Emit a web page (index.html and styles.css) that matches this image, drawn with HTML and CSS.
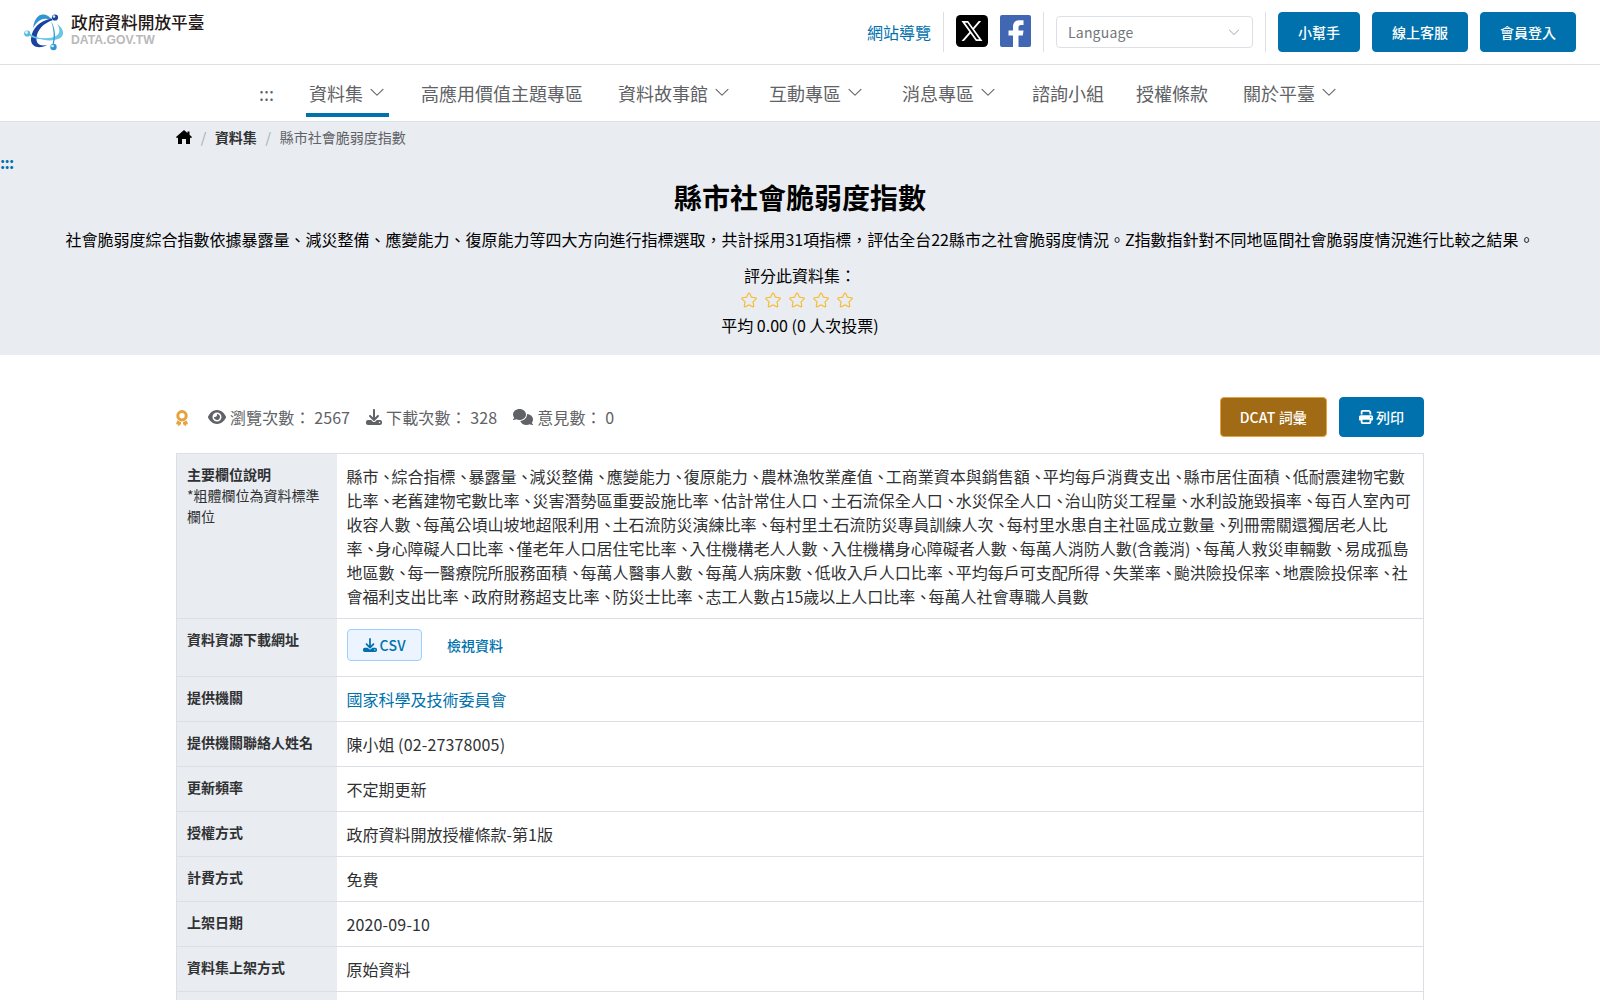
FILE: index.html
```
<!DOCTYPE html>
<html lang="zh-Hant-TW">
<head>
    <meta charset="UTF-8">
    <meta name="viewport" content="width=device-width, initial-scale=1.0">
    <title>縣市社會脆弱度指數 | 政府資料開放平臺</title>
    <link rel="stylesheet" href="styles.css">
</head>
<body>
    <!-- shared icons -->
    <svg class="sprite" width="0" height="0">
        <symbol id="chevron" viewBox="0 0 1024 1024"><path d="M831.872 340.864 512 652.672 192.128 340.864a30.592 30.592 0 0 0-42.752 0 29.12 29.12 0 0 0 0 41.6L489.664 714.24a32 32 0 0 0 44.672 0l340.288-331.712a29.12 29.12 0 0 0 0-41.728 30.592 30.592 0 0 0-42.752 0z"/></symbol>
        <symbol id="star" viewBox="0 0 1024 1024"><path d="m512 747.84 228.16 119.936a6.4 6.4 0 0 0 9.28-6.72l-43.52-254.08 184.512-179.904a6.4 6.4 0 0 0-3.52-10.88l-255.104-37.12L517.76 147.904a6.4 6.4 0 0 0-11.52 0L392.192 379.072l-255.104 37.12a6.4 6.4 0 0 0-3.52 10.88L318.08 606.976l-43.584 254.08a6.4 6.4 0 0 0 9.28 6.72L512 747.84zM313.6 924.48a70.4 70.4 0 0 1-102.144-74.24l37.888-220.928L88.96 472.96A70.4 70.4 0 0 1 128 352.896l221.76-32.256 99.2-200.96a70.4 70.4 0 0 1 126.208 0l99.2 200.96 221.824 32.256a70.4 70.4 0 0 1 39.04 120.064L774.72 629.376l37.888 220.928a70.4 70.4 0 0 1-102.144 74.24L512 820.096l-198.4 104.32z"/></symbol>
        <symbol id="download" viewBox="0 0 512 512"><path d="M288 32c0-17.700-14.300-32-32-32s-32 14.300-32 32v242.700l-73.400-73.400c-12.500-12.500-32.800-12.500-45.300 0s-12.500 32.800 0 45.300l128 128c12.500 12.500 32.800 12.500 45.300 0l128-128c12.500-12.500 12.500-32.800 0-45.300s-32.800-12.500-45.300 0L288 274.700V32zM64 352c-35.300 0-64 28.700-64 64v32c0 35.300 28.700 64 64 64h384c35.300 0 64-28.700 64-64v-32c0-35.300-28.700-64-64-64H346.500l-45.300 45.300c-25 25-65.500 25-90.500 0L165.500 352H64zm368 56a24 24 0 1 1 0 48 24 24 0 1 1 0-48z"/></symbol>
    </svg>

    <header class="header">
        <a class="logo" href="#">
            <svg width="40" height="37" viewBox="0 0 40 37">
                <path d="M9 14C10.500 5 14 .5 19 .5c4 0 7.500 2.500 9.500 6.500C25 4.500 21 4 17.500 5.500 13.500 7.200 11.500 10 9 14z" fill="#2f96d3"/>
                <path d="M33 9.500c7.500 6 8.500 12.500 1 15.500-6 2.500-15 1.500-23-2 8 2 16.500 1.500 21-1 4.500-2.700 4-7.500 1-12.500z" fill="#68c6e6"/>
                <path d="M28 4.500C16 6 7.500 15 7 25c-.4 8 8 10.500 16 6-7 1.500-11-1-10.500-7C13 16 19.500 9.500 28.500 6z" fill="#1a43a0"/>
                <path d="M27 7c4.500 8 5 16 2.500 24l-1-.5c2-7.500 1.500-15.500-1.500-23.500z" fill="#2f96d3"/>
                <path d="M5 19c5 4 10 5.500 18 6-8 1-15-.5-19-4.500z" fill="#68c6e6"/>
                <circle cx="31" cy="3.500" r="3.100" fill="#1a43a0"/>
                <circle cx="30" cy="2.500" r="1.300" fill="#dfe9f8"/>
                <circle cx="3.200" cy="19.500" r="3.100" fill="#55bce2"/>
                <circle cx="2.500" cy="18.500" r="1.400" fill="#e8f8fc"/>
                <circle cx="29.500" cy="33" r="3.200" fill="#2f96d3"/>
                <circle cx="28.500" cy="32" r="1.300" fill="#dff1fa"/>
            </svg>
            <span class="logo-text">
                <span class="logo-name">政府資料開放平臺</span>
                <span class="logo-domain">DATA.GOV.TW</span>
            </span>
        </a>
        <div class="tools">
            <a class="sitemap" href="#">網站導覽</a>
            <span class="divider"></span>
            <a class="social" href="#">
                <svg width="32" height="32" viewBox="0 0 32 32">
                    <rect width="32" height="32" rx="4.500"/>
                    <path d="M5.500 6h6.600l4.900 6.700L22.700 6h2.500l-7.100 8.200L26.500 26h-6.600l-5.400-7.500L8 26H5.500l7.900-9.100zM9 7.800 20.700 24.200h2.500L11.400 7.800z" fill="#fff" fill-rule="evenodd"/>
                </svg>
            </a>
            <a class="social" href="#">
                <svg width="31" height="32" viewBox="0 0 31 32">
                    <rect width="31" height="32" rx="2" fill="#4267b2"/>
                    <path d="M13 32V20.500H8.500v-5H13V12c0-4.500 2.500-6.800 6-6.800h4.500V10H21c-2 0-2.500 1-2.500 2.300v3.200h5l-.7 5h-4.300V32z" fill="#fff"/>
                </svg>
            </a>
            <span class="divider"></span>
            <div class="select">
                <span>Language</span>
                <svg class="arrow"><use href="#chevron"/></svg>
            </div>
            <span class="divider"></span>
            <button class="btn">小幫手</button>
            <button class="btn">線上客服</button>
            <button class="btn">會員登入</button>
        </div>
    </header>

    <nav class="nav">
        <a class="accesskey" href="#">:::</a>
        <a class="drop active" href="#">資料集<svg><use href="#chevron"/></svg></a>
        <a href="#">高應用價值主題專區</a>
        <a class="drop" href="#">資料故事館<svg><use href="#chevron"/></svg></a>
        <a class="drop" href="#">互動專區<svg><use href="#chevron"/></svg></a>
        <a class="drop" href="#">消息專區<svg><use href="#chevron"/></svg></a>
        <a href="#">諮詢小組</a>
        <a href="#">授權條款</a>
        <a class="drop" href="#">關於平臺<svg><use href="#chevron"/></svg></a>
    </nav>

    <section class="hero">
        <div class="breadcrumb">
            <svg width="16" height="14" viewBox="0 0 16 14"><path d="M8 0 0 7l1 1.200 1-.7V14h4V9h4v5h4V7.500l1 .7L16 7l-2.500-2.200V1.500h-2V3z"/></svg>
            <i>/</i>
            <b>資料集</b>
            <i>/</i>
            <span>縣市社會脆弱度指數</span>
        </div>
        <a class="content-key" href="#">:::</a>
        <h1>縣市社會脆弱度指數</h1>
        <p class="desc">社會脆弱度綜合指數依據暴露量、減災整備、應變能力、復原能力等四大方向進行指標選取，共計採用31項指標，評估全台22縣市之社會脆弱度情況。Z指數指針對不同地區間社會脆弱度情況進行比較之結果。</p>
        <div class="rating">
            <div>評分此資料集：</div>
            <div class="stars">
                <svg><use href="#star"/></svg>
                <svg><use href="#star"/></svg>
                <svg><use href="#star"/></svg>
                <svg><use href="#star"/></svg>
                <svg><use href="#star"/></svg>
            </div>
            <div class="average">平均 0.00 (0 人次投票)</div>
        </div>
    </section>

    <main class="container">
        <div class="toolbar">
            <div class="stats">
                <svg class="medal" width="12" height="16" viewBox="0 0 12 16">
                    <circle cx="6" cy="5.700" r="4.200" fill="none" stroke="#e6a23c" stroke-width="3"/>
                    <path d="M1.200 10.500 5 12v2.500H3.700v1.300H1.800v-1.500H0zM10.800 10.500 7 12v2.500h1.300v1.300h1.900v-1.500H12z" fill="#e6a23c"/>
                </svg>
                <span class="stat">
                    <svg width="18" height="16" viewBox="0 0 576 512"><path d="M288 32c-80.800 0-145.500 36.800-192.600 80.600C48.600 156 17.300 208 2.500 243.700c-3.300 7.900-3.300 16.700 0 24.600C17.300 304 48.600 356 95.400 399.400 142.500 443.200 207.200 480 288 480s145.500-36.800 192.600-80.600c46.800-43.500 78.100-95.400 93-131.100 3.300-7.900 3.300-16.700 0-24.600-14.900-35.700-46.200-87.700-93-131.100C433.500 68.800 368.800 32 288 32zM144 256a144 144 0 1 1 288 0 144 144 0 1 1-288 0zm144-64c0 35.300-28.700 64-64 64-7.100 0-13.900-1.200-20.300-3.300-5.500-1.800-11.900 1.600-11.700 7.400.3 6.900 1.300 13.800 3.200 20.700 13.700 51.200 66.400 81.600 117.600 67.900s81.600-66.400 67.900-117.600c-11.100-41.500-47.800-69.400-88.600-71.100-5.800-.2-9.200 6.100-7.400 11.700 2.100 6.400 3.300 13.200 3.300 20.300z"/></svg>
                    瀏覽次數： 2567
                </span>
                <span class="stat">
                    <svg width="16" height="16"><use href="#download"/></svg>
                    下載次數： 328
                </span>
                <span class="stat">
                    <svg width="20" height="16" viewBox="0 0 640 512"><path d="M208 352c114.900 0 208-78.800 208-176S322.900 0 208 0 0 78.800 0 176c0 38.600 14.700 74.300 39.600 103.400-3.500 9.400-8.700 17.700-14.200 24.700-4.800 6.200-9.700 11-13.300 14.300-1.800 1.600-3.300 2.900-4.300 3.700C1.300 326.400-1.400 334.400.8 341.400S8.700 352 16 352c21.800 0 43.800-5.600 62.100-12.500 9.200-3.500 17.800-7.400 25.300-11.400C134.100 343.300 169.800 352 208 352zM448 176c0 112.300-99.100 196.900-216.500 207C255.800 457.400 336.400 512 432 512c38.200 0 73.900-8.700 104.700-23.900 7.500 4 16 7.900 25.200 11.400C580.200 506.400 602.200 512 624 512c7.300 0 13.900-4.800 16.100-11.700s-.5-14.900-6.600-19.500c-1-.8-2.500-2-4.300-3.700-3.600-3.300-8.500-8.100-13.300-14.300-5.500-7-10.700-15.400-14.200-24.700 24.900-29 39.600-64.700 39.600-103.400 0-92.800-84.900-168.900-192.600-175.500.4 5.100.6 10.300.6 15.500z"/></svg>
                    意見數： 0
                </span>
            </div>
            <div class="actions">
                <button class="btn warning">DCAT 詞彙</button>
                <button class="btn">
                    <svg width="14" height="14" viewBox="0 0 512 512"><path d="M128 0C92.700 0 64 28.700 64 64v96h64V64h226.700L384 93.300V160h64V93.300c0-17-6.700-33.300-18.700-45.300L400 18.700C388 6.700 371.700 0 354.700 0H128zM384 352v96H128v-96h256zM448 384h32c17.700 0 32-14.300 32-32v-96c0-35.300-28.700-64-64-64H64c-35.300 0-64 28.700-64 64v96c0 17.700 14.300 32 32 32h32v64c0 35.300 28.700 64 64 64h256c35.300 0 64-28.700 64-64zm-16-136a24 24 0 1 1 0 48 24 24 0 1 1 0-48z" fill-rule="evenodd"/></svg>
                    列印
                </button>
            </div>
        </div>

        <table class="info">
            <tr>
                <th>主要欄位說明<small>*粗體欄位為資料標準欄位</small></th>
                <td class="fields">縣市<i>、</i>綜合指標<i>、</i>暴露量<i>、</i>減災整備<i>、</i>應變能力<i>、</i>復原能力<i>、</i>農林漁牧業產值<i>、</i>工商業資本與銷售額<i>、</i>平均每戶消費支出<i>、</i>縣市居住面積<i>、</i>低耐震建物宅數比率<i>、</i>老舊建物宅數比率<i>、</i>災害潛勢區重要設施比率<i>、</i>估計常住人口<i>、</i>土石流保全人口<i>、</i>水災保全人口<i>、</i>治山防災工程量<i>、</i>水利設施毀損率<i>、</i>每百人室內可收容人數<i>、</i>每萬公頃山坡地超限利用<i>、</i>土石流防災演練比率<i>、</i>每村里土石流防災專員訓練人次<i>、</i>每村里水患自主社區成立數量<i>、</i>列冊需關還獨居老人比率<i>、</i>身心障礙人口比率<i>、</i>僅老年人口居住宅比率<i>、</i>入住機構老人人數<i>、</i>入住機構身心障礙者人數<i>、</i>每萬人消防人數(含義消)<i>、</i>每萬人救災車輛數<i>、</i>易成孤島地區數<i>、</i>每一醫療院所服務面積<i>、</i>每萬人醫事人數<i>、</i>每萬人病床數<i>、</i>低收入戶人口比率<i>、</i>平均每戶可支配所得<i>、</i>失業率<i>、</i>颱洪險投保率<i>、</i>地震險投保率<i>、</i>社會福利支出比率<i>、</i>政府財務超支比率<i>、</i>防災士比率<i>、</i>志工人數占15歲以上人口比率<i>、</i>每萬人社會專職人員數</td>
            </tr>
            <tr>
                <th>資料資源下載網址</th>
                <td>
                    <div class="resource">
                        <button class="csv"><svg width="14" height="14"><use href="#download"/></svg>CSV</button>
                        <a href="#">檢視資料</a>
                    </div>
                </td>
            </tr>
            <tr>
                <th>提供機關</th>
                <td><a href="#">國家科學及技術委員會</a></td>
            </tr>
            <tr>
                <th>提供機關聯絡人姓名</th>
                <td>陳小姐 <span class="num">(02-27378005)</span></td>
            </tr>
            <tr>
                <th>更新頻率</th>
                <td>不定期更新</td>
            </tr>
            <tr>
                <th>授權方式</th>
                <td>政府資料開放授權條款-第1版</td>
            </tr>
            <tr>
                <th>計費方式</th>
                <td>免費</td>
            </tr>
            <tr>
                <th>上架日期</th>
                <td><span class="num">2020-09-10</span></td>
            </tr>
            <tr>
                <th>資料集上架方式</th>
                <td>原始資料</td>
            </tr>
            <tr>
                <th></th>
                <td></td>
            </tr>
        </table>
    </main>
</body>
</html>
```
FILE: styles.css
```
* {
    box-sizing: border-box;
}
body {
    margin: 0;
    height: 100vh;
    overflow: hidden;
    background-color: #fff;
    color: #303133;
    font-family: "Noto Sans CJK TC", sans-serif;
    font-size: 16px;
    line-height: 24px;
}
a {
    color: #0071ad;
    text-decoration: none;
}
i {
    font-style: normal;
}
svg {
    flex: none;
    fill: currentColor;
}
.sprite {
    display: none;
}

/* header */
.header {
    display: flex;
    justify-content: space-between;
    align-items: center;
    height: 65px;
    padding: 0 24px;
    border-bottom: 1px solid #dcdfe6;
}
.logo {
    display: flex;
    gap: 7px;
}
.logo-text {
    display: flex;
    flex-direction: column;
    margin-top: -2px;
}
.logo-name {
    color: #231815;
    font-size: 16.7px;
    font-weight: 500;
    line-height: 20px;
}
.logo-domain {
    margin-top: 1px;
    color: #b9b9ba;
    font-family: "Liberation Sans", Arial, sans-serif;
    font-size: 12.2px;
    font-weight: bold;
    line-height: 14px;
}
.tools {
    display: flex;
    align-items: center;
    gap: 12px;
}
.divider {
    width: 1px;
    height: 40px;
    background-color: #dcdfe6;
}
.social {
    height: 32px;
    margin-top: -3px;
    color: #000;
}
.select {
    display: flex;
    justify-content: space-between;
    align-items: center;
    width: 197px;
    height: 32px;
    padding: 0 11px;
    border: 1px solid #dcdfe6;
    border-radius: 4px;
    color: #73767a;
    font-size: 14px;
    letter-spacing: 0.2px;
}
.arrow {
    width: 14px;
    height: 14px;
    color: #a8abb2;
}
.btn {
    display: flex;
    align-items: center;
    gap: 3px;
    height: 40px;
    padding: 0 19px;
    border: 1px solid #0071ad;
    border-radius: 4px;
    background-color: #0071ad;
    color: #fff;
    font-family: inherit;
    font-size: 14px;
    font-weight: 500;
}
.btn.warning {
    border-color: #e6a23c;
    background-color: #a16a15;
    letter-spacing: 0.15px;
}

/* navigation */
.nav {
    display: flex;
    justify-content: center;
    gap: 32px;
    height: 57px;
    border-bottom: 1px solid #dcdfe6;
}
.nav a {
    height: 52px;
    color: #606266;
    font-size: 18px;
    line-height: 57px;
}
.nav .drop {
    display: flex;
    align-items: center;
    padding: 8px 3px 0;
    border-bottom: 4px solid transparent;
    line-height: 24px;
}
.nav .drop svg {
    width: 18px;
    height: 18px;
    margin: 0 0 2px 5px;
}
.nav .active {
    border-color: #0071ad;
}

/* dataset heading */
.hero {
    height: 233px;
    background-color: #e9ecf1;
    color: #000;
    text-align: center;
}
.breadcrumb {
    display: flex;
    align-items: center;
    width: 1248px;
    height: 30px;
    margin: 0 auto;
    color: #606266;
    font-size: 14px;
}
.breadcrumb svg {
    color: #000;
}
.breadcrumb i {
    margin: 0 8.7px;
    color: #a8abb2;
}
.breadcrumb b {
    color: #303133;
}
.content-key {
    display: block;
    margin-top: -2px;
    font-weight: bold;
    letter-spacing: -0.7px;
    text-align: left;
}
.hero h1 {
    margin: 2px 0 0;
    font-size: 28px;
    line-height: 42px;
}
.desc {
    margin: 9px 0 12px;
}
.stars {
    display: flex;
    justify-content: center;
    gap: 6px;
    height: 25px;
    padding: 4px 6px 0 0;
}
.stars svg {
    width: 18px;
    height: 18px;
    color: #f7ba2a;
}
.average {
    margin-top: 1px;
}

/* dataset detail */
.container {
    width: 1248px;
    margin: 42px auto 0;
}
.toolbar,
.stats,
.actions {
    display: flex;
    align-items: center;
}
.toolbar {
    justify-content: space-between;
    margin-bottom: 16px;
}
.stats {
    color: #606266;
}
.medal {
    margin: 2px 20px 0 0;
}
.stat {
    display: flex;
    align-items: center;
    gap: 4px;
    margin-right: 16px;
    letter-spacing: 0.1px;
}
.actions {
    gap: 12px;
}
.info {
    width: 100%;
    border: 1px solid #dcdfe6;
    border-collapse: collapse;
    table-layout: fixed;
}
.info tr {
    border-bottom: 1px solid #dcdfe6;
}
.info th,
.info td {
    padding: 10px;
    vertical-align: top;
}
.info th {
    width: 160px;
    background-color: #e9ecf1;
    font-size: 14px;
    line-height: 21px;
    text-align: left;
}
.info td {
    height: 45px;
}
.info small {
    display: block;
    font-size: 14px;
    font-weight: normal;
}
.fields i {
    letter-spacing: -3px;
}
.num {
    letter-spacing: 0.15px;
}
.resource {
    display: flex;
    align-items: center;
    gap: 25px;
    height: 32px;
    margin-bottom: 5px;
    font-size: 14px;
    font-weight: 500;
}
.csv {
    display: flex;
    align-items: center;
    gap: 3px;
    height: 32px;
    padding: 0 15px;
    border: 1px solid #a0cfff;
    border-radius: 4px;
    background-color: #ecf5ff;
    color: #0071ad;
    font-family: inherit;
    font-size: 14px;
    font-weight: 500;
    letter-spacing: 0.3px;
}
```
